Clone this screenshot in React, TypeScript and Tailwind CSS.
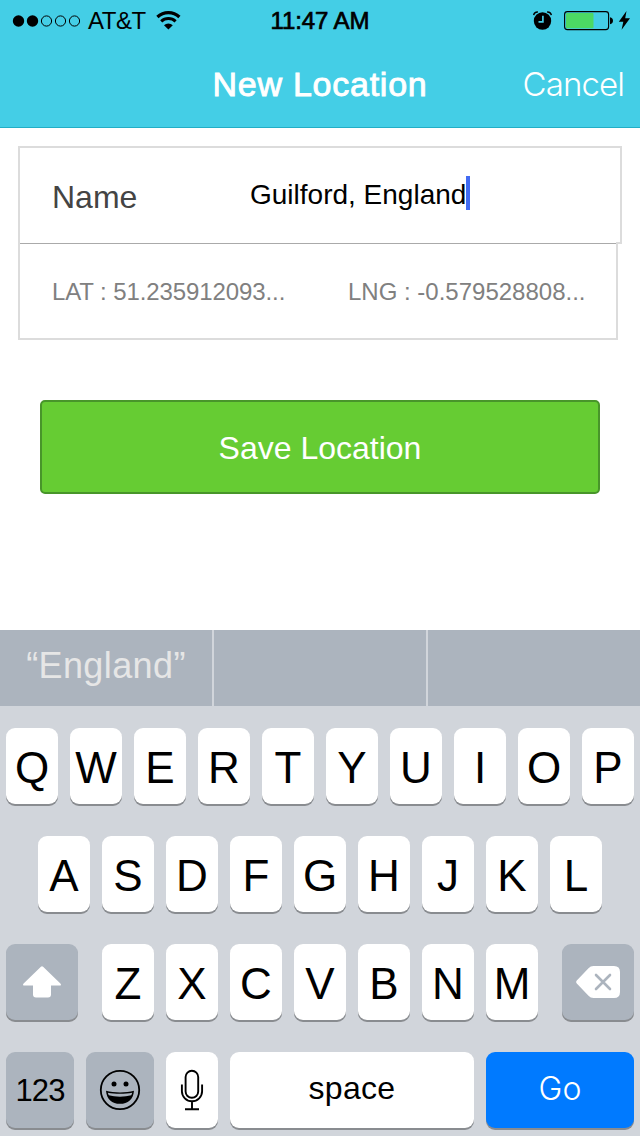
import { useState } from "react";
import type { ReactNode } from "react";
import clsx from "clsx";

type KeyProps = {
  children: ReactNode;
  label?: string;
  className?: string;
  onClick?: () => void;
};

const topRow = ["Q", "W", "E", "R", "T", "Y", "U", "I", "O", "P"];
const middleRow = ["A", "S", "D", "F", "G", "H", "J", "K", "L"];
const bottomRow = ["Z", "X", "C", "V", "B", "N", "M"];

function Key({ children, label, className, onClick }: KeyProps) {
  return (
    <button
      type="button"
      aria-label={label}
      onClick={onClick}
      className={clsx(
        "flex h-[76px] shrink-0 items-center justify-center rounded-[9px] shadow-[0_2px_0_#898c90]",
        className
      )}
    >
      {children}
    </button>
  );
}

function LetterKey({ letter, onPress }: { letter: string; onPress: (letter: string) => void }) {
  return (
    <Key className="w-[52px] bg-white text-[44px] leading-none" onClick={() => onPress(letter)}>
      <span className="pt-[3px]">{letter}</span>
    </Key>
  );
}

function StatusBar() {
  return (
    <div className="grid h-10 grid-cols-3 items-center pt-px text-2xl text-black">
      <div className="flex items-center pl-3">
        <svg width="70" height="14" viewBox="0 0 70 14">
          <circle cx="6.5" cy="7" r="5.7" />
          <circle cx="20.5" cy="7" r="5.7" />
          <circle cx="34.5" cy="7" r="5.1" fill="none" stroke="black" />
          <circle cx="48.5" cy="7" r="5.1" fill="none" stroke="black" />
          <circle cx="62.5" cy="7" r="5.1" fill="none" stroke="black" />
        </svg>
        <span className="ml-1.5 tracking-[-0.5px]">AT&amp;T</span>
        <svg className="ml-2.5" width="26" height="20" viewBox="0 0 26 20">
          <path d="M1.4 6a16 16 0 0 1 22 0" fill="none" stroke="black" strokeWidth="3.2" />
          <path d="M5.200 10.400a10.400 10.400 0 0 1 14.400 0" fill="none" stroke="black" strokeWidth="3" />
          <path d="M8 14.200a6.400 6.400 0 0 1 8.800 0L12.400 18.600z" />
        </svg>
      </div>
      <span className="text-center tracking-[-0.1px] [-webkit-text-stroke:0.7px_black]">
        11:47 AM
      </span>
      <div className="flex items-center justify-end pr-[9px]">
        <svg width="20" height="20" viewBox="0 0 20 20">
          <circle cx="9.500" cy="10" r="8.700" />
          <path d="M.7 4.200C1 2 2.700 .8 4.900 .9M18.300 4.200C18 2 16.300 .8 14.100 .9" fill="none" stroke="black" strokeWidth="1.500" />
          <path d="M9.900 4.800v6H5.500" fill="none" stroke="#44cee6" strokeWidth="1.700" />
        </svg>
        <svg className="ml-[11px]" width="50" height="20" viewBox="0 0 50 20">
          <rect x="0.600" y="0.600" width="44" height="18" rx="2.800" fill="none" stroke="black" strokeWidth="1.100" />
          <rect x="2" y="2" width="27.500" height="15.200" rx="1" fill="#4cd964" />
          <path d="M46 6.200c4 .5 4 6.500 0 7z" />
        </svg>
        <svg className="ml-1" width="13" height="20" viewBox="0 0 13 20">
          <path d="M8.500 0L.8 10.700h4.500L3.600 18.700L12 7.200H7.200z" />
        </svg>
      </div>
    </div>
  );
}

export default function App() {
  const [name, setName] = useState("Guilford, England");

  const addLetter = (letter: string) => {
    setName((prev) => prev + letter.toLowerCase());
  };

  return (
    <div className="flex h-[1136px] w-[640px] flex-col overflow-hidden bg-white font-['Liberation_Sans',Arial,sans-serif] text-black">
      <header className="h-32 border-b border-[#22aec6] bg-[#44cee6]">
        <StatusBar />
        <div className="grid h-[87px] grid-cols-[1fr_auto_1fr] items-center pr-4 pt-0.5 text-[34px] text-white">
          <h1 className="col-start-2 pl-4 tracking-[0.75px] [-webkit-text-stroke:0.9px_white]">
            New Location
          </h1>
          <button type="button" className="justify-self-end font-['Inter'] text-[33px] font-light tracking-[-0.9px]">
            Cancel
          </button>
        </div>
      </header>

      <main className="flex h-[502px] flex-col">
        {/* Location form */}
        <div className="ml-[18px] mt-[18px] flex h-[98px] w-[604px] items-center border-2 border-[#dcdcdc] pl-8">
          <span className="w-[198px] pt-1 text-[32px] text-[#444444]">Name</span>
          <span className="text-[28px] leading-[34px]">{name}</span>
          <span className="mb-1 h-[34px] w-1 bg-[#426bf2]" />
        </div>
        <div className="relative ml-[18px] -mt-0.5 h-[98px] w-[600px] border-x-2 border-b-2 border-[#dcdcdc] bg-white pt-px">
          <div className="flex h-[95px] items-center border-t border-[#aaaaaa] pl-8 pt-0.5 text-2xl text-[#808080]">
            <span className="w-[296px] tracking-[-0.1px]">LAT : 51.235912093...</span>
            <span>LNG : -0.579528808...</span>
          </div>
        </div>

        <button
          type="button"
          className="mx-10 mt-[60px] h-[94px] rounded-[5px] border-2 border-[#48952a] bg-[#66cc33] pt-0.5 text-[32px] text-white"
        >
          Save Location
        </button>
      </main>

      {/* Suggestions */}
      <div className="grid h-[76px] grid-cols-3 gap-0.5 bg-[#d1d5db] text-center text-4xl leading-[71px] text-[#e6e6e6]">
        <div className="bg-[#acb4be] tracking-[0.4px]">“England”</div>
        <div className="bg-[#acb4be]" />
        <div className="bg-[#acb4be]" />
      </div>

      {/* Keyboard */}
      <div className="flex h-[430px] flex-col gap-8 bg-[#d1d5db] px-1.5 pt-[22px]">
        <div className="flex gap-3">
          {topRow.map((letter) => (
            <LetterKey key={letter} letter={letter} onPress={addLetter} />
          ))}
        </div>
        <div className="flex justify-center gap-3">
          {middleRow.map((letter) => (
            <LetterKey key={letter} letter={letter} onPress={addLetter} />
          ))}
        </div>
        <div className="flex justify-between">
          <Key label="Shift" className="w-[72px] bg-[#acb4be]">
            <svg width="40" height="34" viewBox="0 0 40 34" fill="white">
              <path d="M18.900 1.700Q20 .6 21.100 1.700L38.400 18.500Q40 20.500 37.500 20.500H29V29.500Q29 32.500 26 32.500H14Q11 32.500 11 29.500V20.500H2.500Q0 20.500 1.600 18.500z" />
            </svg>
          </Key>
          <div className="flex gap-3">
            {bottomRow.map((letter) => (
              <LetterKey key={letter} letter={letter} onPress={addLetter} />
            ))}
          </div>
          <Key label="Delete" className="w-[72px] bg-[#acb4be]" onClick={() => setName((prev) => prev.slice(0, -1))}>
            <svg width="44" height="32" viewBox="0 0 44 32">
              <path d="M.8 14.500L12.500 2.200Q14.500 0 17.500 0H38Q44 0 44 6V26Q44 32 38 32H17.500Q14.500 32 12.500 29.800L.8 17.500Q-.5 16 .8 14.500z" fill="white" />
              <path d="M20 9l14 14M34 9L20 23" stroke="#acb4be" strokeWidth="2.600" strokeLinecap="round" />
            </svg>
          </Key>
        </div>
        <div className="flex gap-3">
          <Key className="w-[68px] bg-[#acb4be] pt-[3px] text-[31px] tracking-[-0.9px]">123</Key>
          <Key label="Emoji" className="w-[68px] bg-[#acb4be]">
            <svg width="42" height="42" viewBox="0 0 42 42">
              <circle cx="21" cy="21" r="19.200" fill="none" stroke="black" strokeWidth="1.800" />
              <circle cx="15" cy="15" r="2.500" />
              <circle cx="27" cy="15" r="2.500" />
              <path d="M7 21.700C15 24 27 24 35 21.700C34.300 30.500 29 34.800 21 34.800S7.700 30.500 7 21.700z" />
              <path d="M8.800 23.700C16 25.200 26 25.200 33.200 23.700Q32.900 25 32.200 26.300C26 28.100 16 28.100 9.800 26.300Q9.100 25 8.800 23.700z" fill="#acb4be" />
            </svg>
          </Key>
          <Key label="Dictation" className="w-[52px] bg-white">
            <svg width="24" height="42" viewBox="0 0 24 42" fill="none" stroke="black" strokeWidth="1.900">
              <rect x="5.600" y="1.800" width="12.600" height="27" rx="6.300" />
              <path d="M1.900 15.500v6.700a10.100 10.100 0 0 0 20.200 0v-6.700M12 32.300v8M5 40.300h14" />
            </svg>
          </Key>
          <Key className="w-[244px] bg-white text-[32px]" onClick={() => setName((prev) => prev + " ")}>
            <span className="pb-1 tracking-[0.3px]">space</span>
          </Key>
          <Key className="w-[148px] bg-[#007aff] font-['Inter'] text-[32px] font-light text-white">
            <span className="pb-[3px]">Go</span>
          </Key>
        </div>
      </div>
    </div>
  );
}
